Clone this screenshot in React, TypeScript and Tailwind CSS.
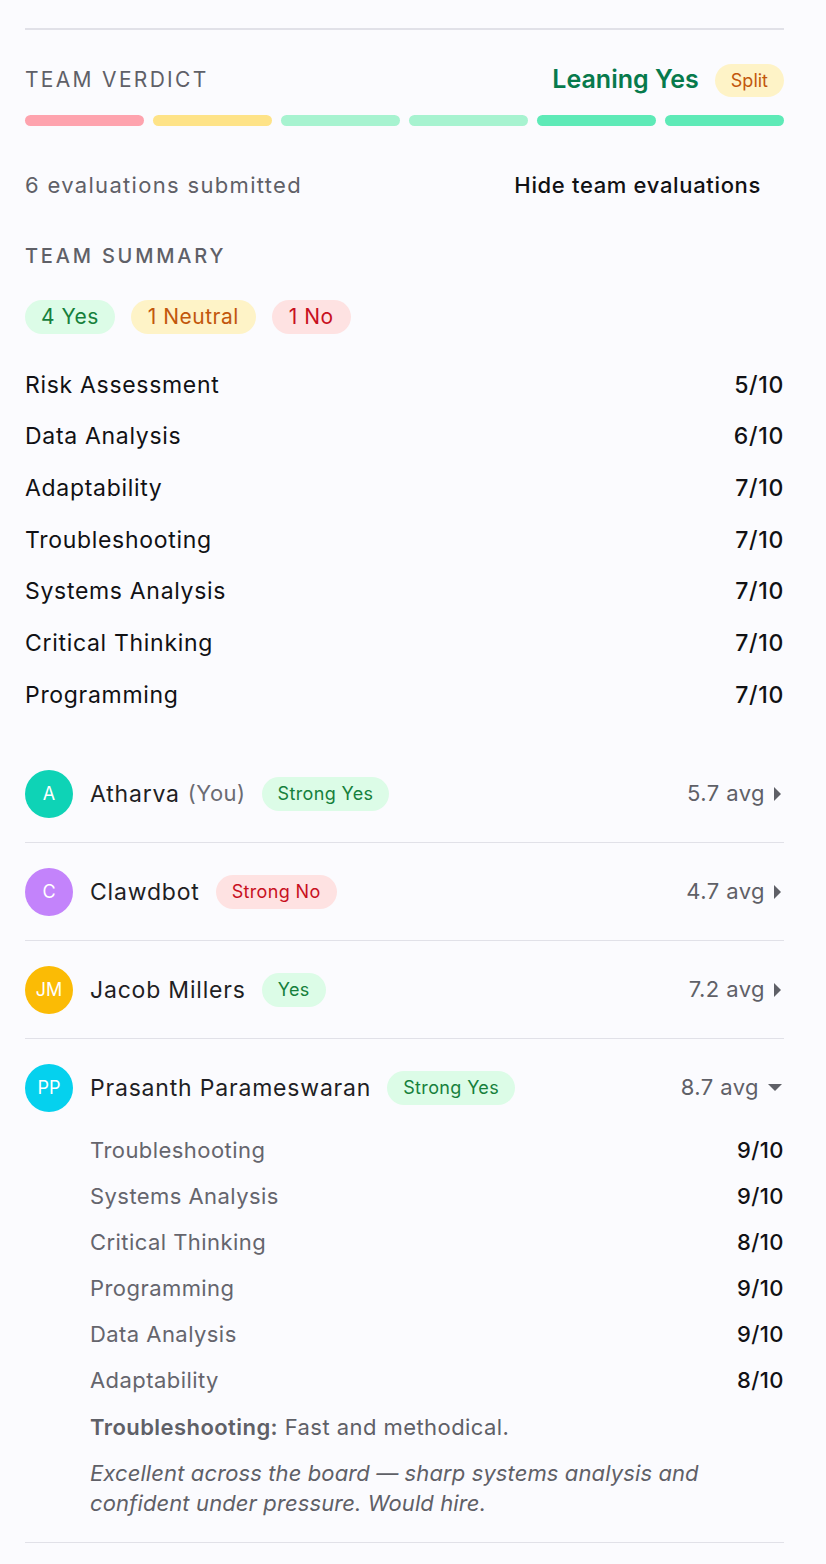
import React from 'react';

const BAR_RENK = ['bg-[#fea3ae]', 'bg-[#fee388]', 'bg-[#a7f3d0]', 'bg-[#a7f3d0]', 'bg-[#5eeab7]', 'bg-[#5eeab7]'];

const OZET = [
  { ad: 'Risk Assessment', puan: '5/10' },
  { ad: 'Data Analysis', puan: '6/10' },
  { ad: 'Adaptability', puan: '7/10' },
  { ad: 'Troubleshooting', puan: '7/10' },
  { ad: 'Systems Analysis', puan: '7/10' },
  { ad: 'Critical Thinking', puan: '7/10' },
  { ad: 'Programming', puan: '7/10' },
];

const KARAR: Record<string, string> = {
  'Strong Yes': 'bg-[#dcfce7] text-[#16803c]',
  Yes: 'bg-[#dcfce7] text-[#16803c]',
  'Strong No': 'bg-[#fee2e2] text-[#c8101e]',
};

type Kisi = {
  bas: string;
  ad: string;
  sen?: boolean;
  karar: string;
  ort: string;
  renk: string;
  acik?: boolean;
};

const KISILER: Kisi[] = [
  { bas: 'A', ad: 'Atharva', sen: true, karar: 'Strong Yes', ort: '5.7', renk: 'bg-[#0ed3b6]' },
  { bas: 'C', ad: 'Clawdbot', karar: 'Strong No', ort: '4.7', renk: 'bg-[#c383fb]' },
  { bas: 'JM', ad: 'Jacob Millers', karar: 'Yes', ort: '7.2', renk: 'bg-[#fbbb05]' },
  { bas: 'PP', ad: 'Prasanth Parameswaran', karar: 'Strong Yes', ort: '8.7', renk: 'bg-[#05d1ee]', acik: true },
];

const DETAY = [
  { ad: 'Troubleshooting', puan: '9/10' },
  { ad: 'Systems Analysis', puan: '9/10' },
  { ad: 'Critical Thinking', puan: '8/10' },
  { ad: 'Programming', puan: '9/10' },
  { ad: 'Data Analysis', puan: '9/10' },
  { ad: 'Adaptability', puan: '8/10' },
];

function KisiSatiri({ k }: { k: Kisi }) {
  return (
    <div className="border-b border-[#e1e1e8] pt-[25px] pb-[24px]">
      <div className="flex h-[48px] items-center">
        <div className={`flex h-[48px] w-[48px] shrink-0 items-center justify-center rounded-full text-[18px] text-white ${k.renk}`}>
          {k.bas}
        </div>
        <span className="ml-[17px] text-[23px] tracking-[0.035em] text-[#1f1f24]">{k.ad}</span>
        {k.sen && <span className="ml-[8px] text-[22px] tracking-[0.02em] text-[#6b6b73]">(You)</span>}
        <span className={`ml-[16px] rounded-full px-[16px] py-[5px] text-[18px] leading-[24px] tracking-[0.02em] ${KARAR[k.karar]}`}>
          {k.karar}
        </span>
        <div className="ml-auto flex items-center gap-[9px] text-[22px] tracking-[0.02em] text-[#5f6067]">
          <span>{k.ort} avg</span>
          {k.acik ? (
            <svg width="14" height="8" viewBox="0 0 14 8" className="mr-[2px]">
              <path d="M0 0h14L7 7z" fill="#5f6067" />
            </svg>
          ) : (
            <svg width="7" height="14" viewBox="0 0 7 14" className="mr-[3px]">
              <path d="M0 0l7 7-7 7z" fill="#5f6067" />
            </svg>
          )}
        </div>
      </div>

      {k.acik && (
        <div className="mt-[16px] pl-[65px]">
          {DETAY.map(d => (
            <div key={d.ad} className="flex h-[46px] items-center justify-between text-[22px] tracking-[0.02em]">
              <span className="text-[#65656d]">{d.ad}</span>
              <span className="font-medium text-[#111114]">{d.puan}</span>
            </div>
          ))}
          <p className="mt-[8px] text-[22px] leading-[30px] tracking-[0.02em] text-[#5f6067]">
            <span className="font-semibold">Troubleshooting:</span> Fast and methodical.
          </p>
          <p className="mt-[16px] text-[22px] italic leading-[30px] tracking-[0.005em] text-[#5f6067]">
            Excellent across the board — sharp systems analysis and
            <br />
            confident under pressure. Would hire.
          </p>
        </div>
      )}
    </div>
  );
}

export default function App() {
  return (
    <div className="min-h-[1564px] w-[826px] bg-[#fbfbfe] pt-[28px] pl-[25px] pr-[42px] font-['Inter',sans-serif]">
      <div className="border-t-2 border-[#e1e1e8]" />

      {/* Takım kararı */}
      <div className="mt-[32px] flex h-[36px] items-center">
        <span className="text-[21px] tracking-[0.11em] text-[#5f6067]">TEAM VERDICT</span>
        <span className="ml-auto text-[25px] font-semibold text-[#077a4c]">Leaning Yes</span>
        <span className="ml-[16px] rounded-full bg-[#fef3c7] px-[16px] py-[4px] text-[18px] leading-[25px] text-[#c2570c]">
          Split
        </span>
      </div>
      <div className="mt-[17px] flex gap-[9px]">
        {BAR_RENK.map((r, i) => (
          <div key={i} className={`h-[11px] flex-1 rounded-full ${r}`} />
        ))}
      </div>

      <div className="mt-[44px] flex h-[30px] items-center">
        <span className="text-[22px] tracking-[0.06em] text-[#5f6067]">6 evaluations submitted</span>
        <button className="ml-auto mr-[23px] text-[22px] font-medium tracking-[0.03em] text-[#111114]">Hide team evaluations</button>
      </div>

      {/* Takım özeti */}
      <div className="mt-[42px] h-[28px] text-[20px] font-medium leading-[28px] tracking-[0.14em] text-[#5f6067]">
        TEAM SUMMARY
      </div>
      <div className="mt-[30px] flex gap-[16px] tracking-[0.03em]">
        <span className="rounded-full bg-[#dcfce7] px-[16px] text-[21px] leading-[34px] text-[#16803c]">4 Yes</span>
        <span className="rounded-full bg-[#fef3c7] px-[17px] text-[21px] leading-[34px] text-[#c2570c]">1 Neutral</span>
        <span className="rounded-full bg-[#fee2e2] px-[17px] text-[21px] leading-[34px] text-[#c8101e]">1 No</span>
      </div>

      <div className="mt-[25px]">
        {OZET.map(o => (
          <div key={o.ad} className="flex h-[51.7px] items-center justify-between text-[23px] tracking-[0.03em]">
            <span className="text-[#111114]">{o.ad}</span>
            <span className="font-medium text-[#111114]">{o.puan}</span>
          </div>
        ))}
      </div>

      {/* Değerlendirmeler */}
      <div className="mt-[24px]">
        {KISILER.map(k => (
          <KisiSatiri key={k.ad} k={k} />
        ))}
      </div>
    </div>
  );
}
